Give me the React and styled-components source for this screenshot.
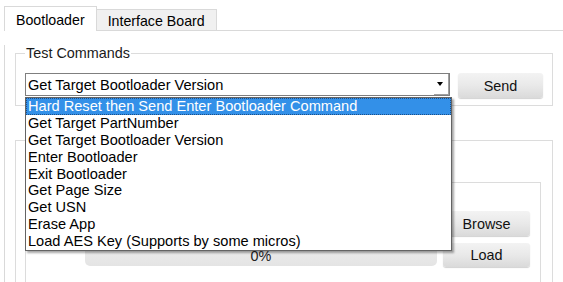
import React from 'react';
import styled, { createGlobalStyle } from 'styled-components';

const GlobalStyle = createGlobalStyle`
  body {
    margin: 0;
    background: #ffffff;
    font-family: "Liberation Sans", Arial, sans-serif;
    color: #000000;
  }
`;

const Page = styled.div`
  width: 563px;
  height: 282px;
  overflow: hidden;
  padding: 6px 0 0 4px;
  box-sizing: border-box;
`;

const TabStrip = styled.div`
  display: flex;
  align-items: flex-end;
  height: 25px;
`;

const Tab = styled.div`
  box-sizing: border-box;
  display: flex;
  align-items: center;
  font-size: 14.2px;
  padding: 0 11px;
  border: 1px solid #d9d9d9;
  height: ${p => (p.$active ? '25px' : '22px')};
  background: ${p => (p.$active ? '#ffffff' : '#f0f0f0')};
  border-bottom: ${p => (p.$active ? 'none' : '1px solid #d9d9d9')};
  border-left: ${p => (p.$active ? '1px solid #d9d9d9' : 'none')};
  padding-top: ${p => (p.$active ? '2px' : '1px')};
`;

const TabFiller = styled.div`
  flex: 1;
  border-bottom: 1px solid #d9d9d9;
`;

const Panel = styled.div`
  border-left: 1px solid #d9d9d9;
  padding: 0 0 0 10px;
  height: 260px;
`;

const GroupBox = styled.fieldset`
  box-sizing: border-box;
  width: ${p => p.$width}px;
  margin: ${p => p.$top}px 0 0 0;
  padding: ${p => p.$pad};
  border: 1px solid #dcdcdc;
  min-width: 0;
`;

const Legend = styled.legend`
  font-size: 14.4px;
  line-height: 17px;
  height: 17px;
  padding: 0 1px;
  margin-left: 0;
  color: #1a1a1a;
`;

const CommandRow = styled.div`
  display: flex;
  align-items: flex-start;
  gap: 8px;
  margin-top: 11px;
`;

const ComboWrap = styled.div`
  position: relative;
  width: 425px;
`;

const Combo = styled.div`
  box-sizing: border-box;
  height: 23px;
  border: 1px solid #7f7f7f;
  background: #ffffff;
  display: flex;
  align-items: center;
  padding-left: 2px;
  font-size: 14.6px;
  position: relative;
`;

const ArrowBox = styled.div`
  position: absolute;
  right: 0;
  top: 0;
  bottom: 0;
  width: 14px;
  border-bottom: 1px solid #a0a0a0;
  border-right: 1px solid #a0a0a0;
  display: flex;
  align-items: center;
  justify-content: center;

  &::after {
    content: '';
    border-left: 3.5px solid transparent;
    border-right: 3.5px solid transparent;
    border-top: 4px solid #000000;
    margin-left: -2px;
  }
`;

const DropList = styled.ul`
  position: absolute;
  z-index: 10;
  left: 0;
  top: 24px;
  width: 427px;
  box-sizing: border-box;
  margin: 0;
  padding: 0;
  list-style: none;
  background: #ffffff;
  border: 1px solid #646464;
  box-shadow: 2px 2px 2px rgba(0, 0, 0, 0.35);
`;

const DropItem = styled.li`
  font-size: 14.6px;
  line-height: 16.9px;
  height: 16.9px;
  padding-left: 2px;
  box-sizing: border-box;
  background: ${p => (p.$selected ? '#3390e8' : 'transparent')};
  color: ${p => (p.$selected ? '#ffffff' : '#000000')};
  outline: ${p => (p.$selected ? '1px dotted #1c4f88' : 'none')};
  outline-offset: -1px;
  white-space: nowrap;
`;

const Button = styled.button`
  box-sizing: border-box;
  width: ${p => p.$width || 87}px;
  height: ${p => p.$height || 25}px;
  border: none;
  border-radius: 3px;
  background: linear-gradient(#f3f3f3, #e9e9e9 50%, #dadada);
  box-shadow: 0 1px 1px rgba(0, 0, 0, 0.18);
  font-family: "Liberation Sans", Arial, sans-serif;
  font-size: 14.4px;
  color: #111111;
  padding: 0;
`;

const FileGrid = styled.div`
  display: grid;
  grid-template-columns: 49px 352px 87px;
  column-gap: 6px;
  row-gap: 7px;
  align-items: center;
  margin-top: 20px;
`;

const PathField = styled.div`
  box-sizing: border-box;
  height: 22px;
  border: 1px solid #abadb3;
  background: #ffffff;
`;

const Progress = styled.div`
  box-sizing: border-box;
  height: 21px;
  margin-top: 1px;
  border-radius: 5px;
  background: linear-gradient(#ececec, #e4e4e4);
  display: flex;
  align-items: center;
  justify-content: center;
  font-size: 14.4px;
  color: #222222;
`;

const commands = [
  'Hard Reset then Send Enter Bootloader Command',
  'Get Target PartNumber',
  'Get Target Bootloader Version',
  'Enter Bootloader',
  'Exit Bootloader',
  'Get Page Size',
  'Get USN',
  'Erase App',
  'Load AES Key (Supports by some micros)',
];

const App = () => {
  return (
    <>
      <GlobalStyle />
      <Page>
        <TabStrip>
          <Tab $active>Bootloader</Tab>
          <Tab>Interface Board</Tab>
          <TabFiller />
        </TabStrip>
        <Panel>
          <GroupBox $width={538} $top={14} $pad="0 9px 7px 9px">
            <Legend>Test Commands</Legend>
            <CommandRow>
              <ComboWrap>
                <Combo>
                  Get Target Bootloader Version
                  <ArrowBox />
                </Combo>
                <DropList>
                  {commands.map((c, i) => (
                    <DropItem key={c} $selected={i === 0}>{c}</DropItem>
                  ))}
                </DropList>
              </ComboWrap>
              <Button $width={85}>Send</Button>
            </CommandRow>
          </GroupBox>

          <GroupBox $width={538} $top={26} $pad="0 9px 0 9px">
            <Legend />
            <GroupBox $width={516} $top={25} $pad="0 10px 20px 4px">
              <Legend />
              <FileGrid>
                <div />
                <PathField />
                <Button>Browse</Button>
                <div />
                <Progress>0%</Progress>
                <Button $height={24}>Load</Button>
              </FileGrid>
            </GroupBox>
          </GroupBox>
        </Panel>
      </Page>
    </>
  );
};

export default App;
